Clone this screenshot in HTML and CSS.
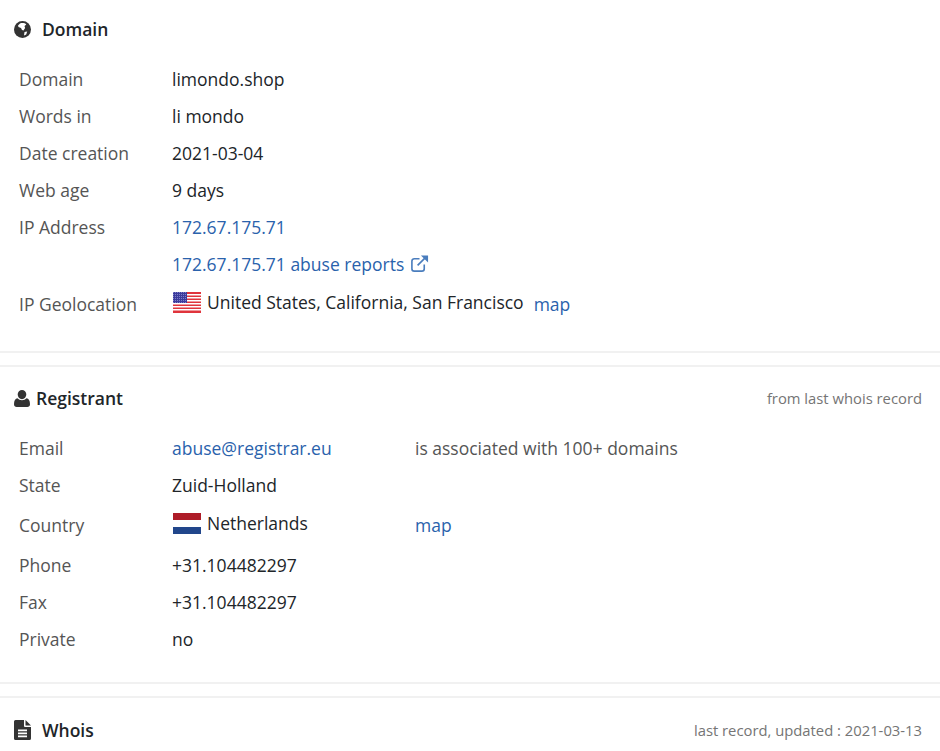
FILE: index.html
```html
<!DOCTYPE html>
<html lang="en">
<head>
<meta charset="utf-8">
<title>limondo.shop</title>
<link rel="stylesheet" href="styles.css">
</head>
<body>
<section class="panel panel-domain">
  <header class="head">
    <h2 class="title title-wide">
      <svg class="icon" viewBox="0 0 17 17" width="17" height="17"><circle cx="8.500" cy="8.500" r="8.500" fill="#333"/><path fill="#fff" d="M6 2.500C8 1.700 11 2 12.300 3.500L10.500 5l.6 2-1.600 2.600L8 9 7 7 4.500 6 4 4.500z"/><path fill="#fff" d="M10.500 11l2.700-.6-1 3.100-2.200 1z"/></svg>
      Domain
    </h2>
  </header>
  <div class="rows">
    <div class="row"><span class="label">Domain</span><span class="value">limondo.shop</span></div>
    <div class="row"><span class="label">Words in</span><span class="value">li mondo</span></div>
    <div class="row"><span class="label">Date creation</span><span class="value">2021-03-04</span></div>
    <div class="row"><span class="label">Web age</span><span class="value">9 days</span></div>
    <div class="row"><span class="label">IP Address</span><a class="value link" href="#">172.67.175.71</a></div>
    <div class="row"><span class="label"></span><a class="value link" href="#">172.67.175.71 abuse reports
      <svg class="ext" viewBox="0 0 20 20" width="19" height="19"><path fill="none" stroke="#4a7dbd" stroke-width="1.700" d="M15 11v4.500a2.500 2.500 0 0 1-2.500 2.500h-8A2.500 2.500 0 0 1 2 15.500v-8A2.500 2.500 0 0 1 4.500 5H10"/><path fill="none" stroke="#4a7dbd" stroke-width="1.700" d="M8 12 17 3"/><path fill="#4a7dbd" d="M11.500 1.500H19V9z"/></svg></a></div>
    <div class="row row-flag"><span class="label">IP Geolocation</span><span class="value place">
      <svg class="flag" viewBox="0 0 28 21" width="28" height="21">
        <defs><pattern id="stars" width="2" height="2" patternUnits="userSpaceOnUse"><rect width="2" height="2" fill="#3c3c9c"/><rect width="1" height="1" fill="#7f7fc8"/></pattern></defs>
        <rect y="0" width="28" height="21" fill="#fff"/>
        <path fill="#e0343c" d="M0 0h28v2H0zM0 3.500h28v1.500H0zM0 6.500h28V8H0zM0 9.500h28V11H0zM0 12.500h28V14H0zM0 15.500h28V17H0zM0 18.500h28V21H0z"/>
        <rect width="14" height="11" fill="url(#stars)"/>
      </svg>
      <span class="place-name">United States, California, San Francisco</span></span><a class="link map-us" href="#">map</a></div>
  </div>
</section>
<section class="panel panel-registrant">
  <header class="head">
    <h2 class="title">
      <svg class="icon" viewBox="0 0 16 17" width="16" height="17"><path fill="#333" d="M8 0a4.300 4.300 0 0 1 4.300 4.300c0 2.600-1.900 4.900-4.300 4.900S3.700 6.900 3.700 4.300A4.300 4.300 0 0 1 8 0zM3.500 8.300C4.600 9.500 6.200 10.300 8 10.300s3.400-.8 4.500-2C14.700 8.700 16 10.800 16 14.200c0 1.700-1.100 2.800-2.700 2.800H2.700C1.100 17 0 15.900 0 14.200c0-3.400 1.300-5.500 3.500-5.900z"/></svg>
      Registrant
    </h2>
    <span class="note">from last whois record</span>
  </header>
  <div class="rows">
    <div class="row"><span class="label">Email</span><a class="value link col-mid" href="#">abuse@registrar.eu</a><span class="assoc">is associated with 100+ domains</span></div>
    <div class="row"><span class="label">State</span><span class="value">Zuid-Holland</span></div>
    <div class="row row-country"><span class="label">Country</span><span class="value place col-mid">
      <svg class="flag" viewBox="0 0 28 21" width="28" height="21">
        <rect y="0" width="28" height="7" fill="#ae1c28"/><rect y="7" width="28" height="7" fill="#fff"/><rect y="14" width="28" height="7" fill="#21468b"/>
      </svg>
      <span class="place-name">Netherlands</span></span><a class="link" href="#">map</a></div>
    <div class="row"><span class="label">Phone</span><span class="value">+31.104482297</span></div>
    <div class="row"><span class="label">Fax</span><span class="value">+31.104482297</span></div>
    <div class="row"><span class="label">Private</span><span class="value">no</span></div>
  </div>
</section>
<section class="panel panel-whois">
  <header class="head">
    <h2 class="title title-wide">
      <svg class="icon" viewBox="0 0 17 20" width="17" height="20"><path fill="#333" d="M0 1.500A1.500 1.500 0 0 1 1.500 0H10v6a1 1 0 0 0 1 1h6v11.500a1.500 1.500 0 0 1-1.500 1.500h-14A1.500 1.500 0 0 1 0 18.500z"/><path fill="#333" d="M11.500 0 17 5.500h-5.500z"/><path fill="#fff" d="M4 9.500h9v1.800H4zM4 12.500h9v1.800H4zM4 15.500h9v1.800H4z"/></svg>
      Whois
    </h2>
    <span class="note">last record, updated : 2021-03-13</span>
  </header>
</section>
</body>
</html>
```
FILE: styles.css
```css
* { box-sizing: border-box; }
html, body { margin: 0; padding: 0; background: #fff; }
body {
  width: 940px;
  height: 751px;
  overflow: hidden;
  font-family: "Open Sans", "Liberation Sans", sans-serif;
  font-size: 17.5px;
  color: #212529;
}
.panel { border-bottom: 2px solid #f1f1f1; margin-bottom: 12px; }
.panel-domain { height: 353px; padding-top: 12px; }
.panel-registrant { height: 319px; padding-top: 0; border-top: 2px solid #f1f1f1; }
.panel-whois { border-top: 2px solid #f1f1f1; border-bottom: 0; margin: 0; }
.head {
  display: flex;
  align-items: center;
  justify-content: space-between;
  height: 34px;
  padding: 0 18px 0 14px;
}
.panel-registrant .head { margin-top: 14px; }
.panel-whois .head { margin-top: 15px; }
.title {
  display: flex;
  align-items: center;
  gap: 6px;
  margin: 0;
  font-size: 17.5px;
  font-weight: 600;
  color: #212529;
}
.title-wide { gap: 11px; }
.note { font-size: 14.8px; color: #757575; }
.rows { padding: 14px 0 0 19px; }
.row { display: flex; align-items: center; height: 37px; }
.row-flag { height: 43px; }
.row-country { height: 43px; }
.label { flex: 0 0 153px; color: #555; }
.value { color: #212529; }
.link { color: #2a62ac; text-decoration: none; }
.col-mid { flex: 0 0 243px; }
.assoc { color: #555; }
.ext { vertical-align: -2px; margin-left: 1px; }
.place { display: inline-flex; align-items: center; gap: 6px; margin-top: -3px; margin-left: 1px; }
.col-mid.place { flex-basis: 242px; }
.flag { flex: none; }
.map-us { margin-left: 10px; }
```
